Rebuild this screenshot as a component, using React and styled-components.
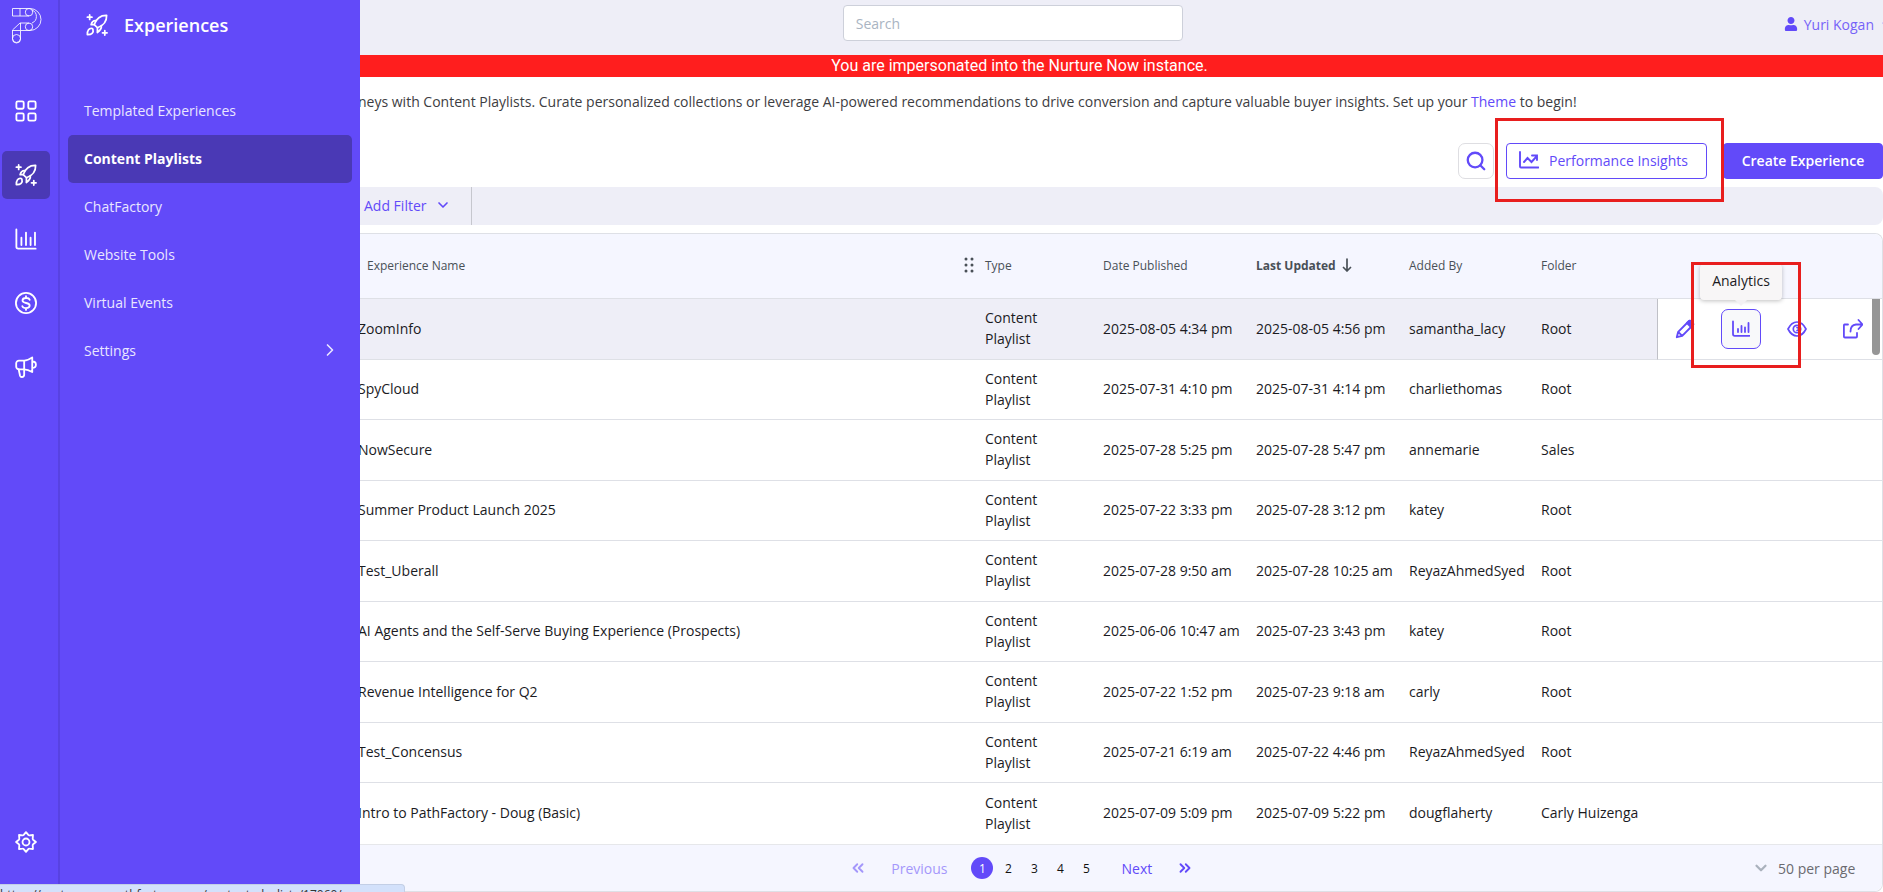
import React from "react";
import styled, { createGlobalStyle, css } from "styled-components";
import { FiSearch, FiChevronDown, FiChevronRight, FiChevronsLeft, FiChevronsRight } from "react-icons/fi";
import { FaUser, FaCaretDown } from "react-icons/fa";

const c = {
  brand: "#624af9",
  brandDark: "#4a39b5",
  railLine: "#5842e2",
  haze: "#eeeef7",
  head: "#f5f6ff",
  line: "#dee0e6",
  text: "#1b1b1f",
  muted: "#495057",
  alert: "#ff1e1e",
  mark: "#e81e1e",
};

const Global = createGlobalStyle`
  *, *::before, *::after { box-sizing: border-box; }
  html, body { margin: 0; background: #fff; }
  body, button, input, select { font-family: "Open Sans", "Noto Sans", sans-serif; font-size: 14px; }
  body { color: ${c.text}; line-height: 21px; }
  button { margin: 0; padding: 0; border: 0; background: none; color: inherit; cursor: pointer; }
  a { color: inherit; text-decoration: none; }
  svg { display: block; flex: none; }
`;

const Page = styled.div`
  display: flex;
  min-height: 100vh;
  overflow: hidden;
`;

/* ---------- navigation ---------- */
const Rail = styled.nav`
  flex: none;
  width: 60px;
  display: flex;
  flex-direction: column;
  gap: 16px;
  padding: 8px 8px 26px 2px;
  border-right: 2px solid ${c.railLine};
  background: ${c.brand};
  color: #fff;
`;

const Logo = styled.a`
  height: 63px;
  padding-left: 10px;
`;

const RailButton = styled.button`
  display: grid;
  place-items: center;
  width: 48px;
  height: 48px;
  border-radius: 5px;
  background: ${(p) => (p.$active ? c.brandDark : "transparent")};
  ${(p) => p.$last && css`margin-top: auto;`}
`;

/* The drawer lies over the left edge of the main column. */
const Drawer = styled.aside`
  position: relative;
  z-index: 1;
  flex: none;
  width: 300px;
  padding: 0 8px;
  background: ${c.brand};
  color: #fff;
`;

const DrawerTitle = styled.h1`
  display: flex;
  align-items: center;
  gap: 16px;
  height: 87px;
  margin: 0;
  padding: 0 18px 38px;
  font-size: 18px;
  font-weight: 600;
  line-height: 24px;
`;

const MenuLink = styled.a`
  display: flex;
  align-items: center;
  justify-content: space-between;
  height: 48px;
  padding: 0 12px 2px 16px;
  border-radius: 5px;
  color: ${(p) => (p.$active ? "#fff" : "#e9e6ff")};
  background: ${(p) => (p.$active ? c.brandDark : "transparent")};
  font-weight: ${(p) => (p.$active ? 700 : 400)};
`;

/* ---------- top ---------- */
const Main = styled.main`
  flex: 1;
  min-width: 0;
  margin-left: -2px;
  display: flex;
  flex-direction: column;
`;

const TopBar = styled.header`
  display: grid;
  grid-template-columns: 9fr 340px 13fr;
  align-items: start;
  height: 55px;
  padding-top: 5px;
  background: ${c.haze};
`;

const SearchField = styled.input`
  grid-column: 2;
  height: 36px;
  padding: 0 12px;
  border: 1px solid #cdd0da;
  border-radius: 4px;
  background: #fff;
  outline: none;
  &::placeholder { color: #a9b4c2; opacity: 1; }
`;

const UserMenu = styled.button`
  justify-self: end;
  display: flex;
  align-items: center;
  gap: 6px;
  height: 40px;
  padding-bottom: 2px;
  color: ${c.brand};
`;

const UserName = styled.span`
  opacity: 0.85;
`;

const CaretClip = styled.span`
  width: 3px;
  overflow: hidden;
`;

const Banner = styled.div`
  height: 22px;
  padding-right: 202px;
  background: ${c.alert};
  color: #fff;
  font: 400 16px/22px Roboto, sans-serif;
  text-align: center;
`;

const Intro = styled.p`
  height: 66px;
  margin: 0;
  padding-top: 14px;
  color: #3d3d42;
  white-space: nowrap;
  a { color: ${c.brand}; }
`;

const Toolbar = styled.div`
  display: flex;
  justify-content: flex-end;
  align-items: flex-start;
  height: 44px;
`;

const ToolButton = styled.button`
  display: flex;
  align-items: center;
  justify-content: center;
  gap: 10px;
  height: 36px;
  padding-bottom: 2px;
  border: 1px solid ${c.brand};
  border-radius: 4px;
  color: ${c.brand};
  ${(p) => p.$kind === "icon" && css`width: 36px; padding-bottom: 0; border-color: #dedee2; border-radius: 7px;`}
  ${(p) => p.$kind === "outline" && css`width: 201px; padding-right: 6px;`}
  ${(p) => p.$kind === "solid" && css`width: 160px; background: ${c.brand}; color: #fff; font-weight: 600;`}
`;

const Marked = styled.div`
  position: relative;
  display: flex;
`;

const ToolbarMarked = styled(Marked)`
  margin: 0 16px 0 12px;
`;

const ToolbarMark = styled.span`
  position: absolute;
  inset: -25px -17px -23px -11px;
  border: 3px solid ${c.mark};
  pointer-events: none;
`;

const ActionMark = styled(ToolbarMark)`
  inset: -47px -40px -19px -30px;
  z-index: 3;
`;

const FilterBar = styled.div`
  display: flex;
  height: 38px;
  margin-bottom: 8px;
  border-radius: 0 8px 8px 0;
  background: ${c.haze};
`;

const AddFilter = styled.button`
  display: flex;
  align-items: center;
  gap: 8px;
  width: 114px;
  padding: 0 0 2px 6px;
  border-right: 1px solid #c6c7ce;
  color: ${c.brand};
`;

/* ---------- table ---------- */
const Panel = styled.section`
  position: relative;
  border: 1px solid ${c.line};
  border-left: 0;
  border-radius: 0 8px 8px 0;
`;

const Table = styled.table`
  width: 100%;
  table-layout: fixed;
  border-collapse: separate;
  border-spacing: 0;
`;

const Th = styled.th`
  height: 65px;
  width: ${(p) => p.$w || "auto"};
  padding: 0 0 2px;
  border-bottom: 1px solid ${c.line};
  background: ${c.head};
  color: ${c.muted};
  font-size: 12px;
  font-weight: ${(p) => (p.$sorted ? 700 : 400)};
  text-align: left;
  &:last-child { border-top-right-radius: 8px; }
`;

const HeadCell = styled.span`
  display: flex;
  align-items: center;
  gap: 6px;
  ${(p) => p.$first && css`justify-content: space-between; padding: 0 10px 0 9px;`}
`;

const Row = styled.tr`
  height: 60px;
  &:nth-child(odd) { height: 61px; }
  background: ${(p) => (p.$hover ? c.haze : "#fff")};
`;

const Td = styled.td`
  padding: ${(p) => (p.$wrap ? "0 40px 2px 0" : "0 0 2px")};
  border-bottom: 1px solid ${c.line};
  white-space: ${(p) => (p.$wrap ? "normal" : "nowrap")};
  tr:last-child & { border-bottom: 0; }
`;

const ActionsTd = styled(Td)`
  padding: 0 0 0 7px;
  ${(p) => p.$open && css`border-left: 1px solid #bfc0c7; background: #fff;`}
`;

const Actions = styled.div`
  display: flex;
  gap: 16px;
`;

const ActionButton = styled.button`
  display: grid;
  place-items: center;
  width: 40px;
  height: 40px;
  border: 1px solid ${(p) => (p.$active ? c.brand : "transparent")};
  border-radius: 7px;
  background: ${(p) => (p.$active ? "#f8f9fa" : "transparent")};
  color: ${c.brand};
`;

const Tooltip = styled.span`
  position: absolute;
  z-index: 2;
  bottom: 49px;
  left: 50%;
  transform: translateX(-50%);
  width: 82px;
  height: 36px;
  border-radius: 4px;
  background: #f8f6f7;
  box-shadow: 0 1px 4px rgba(0, 0, 0, 0.25);
  line-height: 34px;
  text-align: center;
  &::after {
    content: "";
    position: absolute;
    top: 100%;
    left: 35px;
    border: 6px solid transparent;
    border-top-color: #f3f1f3;
    border-bottom: 0;
  }
`;

const ScrollThumb = styled.span`
  position: absolute;
  top: 65px;
  right: 2px;
  width: 8px;
  height: 56px;
  border-radius: 0 0 4px 4px;
  background: #969696;
`;

const PanelFooter = styled.footer`
  display: grid;
  grid-template-columns: 5fr auto 7fr;
  align-items: center;
  height: 47px;
  border-top: 1px solid #e6e7ea;
  border-bottom-right-radius: 8px;
  background: ${c.head};
`;

const Pager = styled.nav`
  grid-column: 2;
  display: flex;
  align-items: center;
  gap: 24px;
`;

const PagerButton = styled.button`
  color: ${c.brand};
  opacity: ${(p) => (p.disabled ? 0.55 : 1)};
`;

const PageList = styled.div`
  display: flex;
  gap: 4px;
`;

const PageNumber = styled.button`
  width: 22px;
  height: 22px;
  border-radius: 50%;
  font-size: 12px;
  color: ${(p) => (p.$current ? "#fff" : "#111")};
  background: ${(p) => (p.$current ? c.brand : "transparent")};
`;

const PerPage = styled.label`
  justify-self: end;
  display: flex;
  align-items: center;
  gap: 8px;
  padding-right: 26px;
  color: #aab2bd;
`;

const PerPageSelect = styled.select`
  appearance: none;
  padding: 0;
  border: 0;
  background: none;
  color: #6a6a70;
`;

const StatusBubble = styled.div`
  position: fixed;
  z-index: 5;
  left: 0;
  bottom: 0;
  width: 405px;
  height: 8px;
  overflow: hidden;
  border: solid #c3cfe6;
  border-width: 1px 1px 0 0;
  border-top-right-radius: 4px;
  background: #d3e1fb;
  color: #333;
  font-size: 12px;
  line-height: 20px;
  white-space: nowrap;
`;

/* ---------- icons ---------- */
const Svg = ({ size = 22, w = 2, children, box = 24 }) => (
  <svg width={size} height={size} viewBox={`0 0 ${box} ${box}`} fill="none" stroke="currentColor"
    strokeWidth={w} strokeLinecap="round" strokeLinejoin="round" aria-hidden="true">
    {children}
  </svg>
);

const LogoMark = () => (
  <svg width="30" height="36" viewBox="0 0 30 36" fill="none" stroke="#fff" strokeOpacity=".85" strokeWidth="1" aria-hidden="true">
    <path d="M.5.5H18a11 11 0 0 1 0 22H8.500V31a4 4 0 0 1-8 0V22L8 15H17" />
    <path d="M.5.5V8H17M8 .5V8M8.500 22.500V15M.5 22.500H8.500" />
    <circle cx="17" cy="4.200" r="3.700" />
    <circle cx="17" cy="18.800" r="3.700" />
    <circle cx="4.500" cy="30.500" r="4" />
    <path d="M20 2a7 7 0 0 1 0 13" />
  </svg>
);

const GridIcon = () => (
  <Svg>
    <rect x="1.500" y="1.500" width="8" height="8" rx="1.500" />
    <rect x="14.500" y="1.500" width="8" height="8" rx="1.500" />
    <rect x="1.500" y="14.500" width="8" height="8" rx="1.500" />
    <rect x="14.500" y="14.500" width="8" height="8" rx="1.500" />
  </Svg>
);

const RocketIcon = () => (
  <Svg w={1.9}>
    <path d="M22.500 1.500C16 1.300 11.500 4.500 9 11.500L12.500 15C19.500 12.500 22.700 8 22.500 1.500Z" />
    <path d="M11.200 7.300C8.500 6.900 6.500 8.300 5.600 11.600L9 11.500M16.700 12.800C17.100 15.500 15.700 18 12.400 20.200L12.500 15" />
    <path d="M7 15.800C3.200 14.800 1.300 18 1.500 22.500C6 22.700 8.800 20.500 7.500 16.500" />
    <path d="M4 1V6M1.500 3.500H6.500M20.500 18V23M18 20.500H23" />
  </Svg>
);

const BarsIcon = ({ size, w = 2 }) => (
  <Svg size={size} w={w}>
    <path d="M1.500 1.500V20.500Q1.500 22.500 3.500 22.500H22.500M7 18.500V10.500M12 18.500V5M17 18.500V10.500M21.800 18.500V5" />
  </Svg>
);

/* Shorter bars, set off from the axis. */
const AnalyticsIcon = () => (
  <Svg size={18} w={1.8} box={18}>
    <path d="M1 1.500V14Q1 15.800 2.800 15.800H17.500" />
    <path d="M6 12V9M9.500 12V6M13 12V7.500M16.500 12V3" />
  </Svg>
);

const DollarIcon = () => (
  <Svg>
    <circle cx="12" cy="12" r="11" />
    <path d="M16 8.500C15.500 7 14 6.500 12 6.500C10 6.500 8.200 7.300 8.200 9.200C8.200 13 16 11 16 14.800C16 16.800 14 17.500 12 17.500C10 17.500 8.500 17 8 15.500M12 4.500V6.500M12 17.500V19.500" />
  </Svg>
);

const MegaphoneIcon = () => (
  <Svg>
    <path d="M10 5H4.500A3 3 0 0 0 1.300 8V11.500A3 3 0 0 0 4.500 14.500H10C13 14.500 16 15.800 18.800 17.500V1.500C16 3.500 13 5 10 5ZM10 5V14.500M18.800 6Q22.800 6 22.800 9.500T18.800 13" />
    <path d="M4 14.500L5.500 21.500Q6 23 7.500 22.900Q10 22.900 10 20.500V14.500" />
  </Svg>
);

const GearIcon = () => (
  <Svg>
    <path d="M12 1.200L14.500 4.300Q15 4.800 15.700 4.700L19.600 4.400L19.300 8.300Q19.200 9 19.700 9.500L22.800 12L19.700 14.500Q19.200 15 19.300 15.700L19.600 19.600L15.700 19.300Q15 19.200 14.500 19.700L12 22.800L9.500 19.700Q9 19.200 8.300 19.300L4.400 19.600L4.700 15.700Q4.800 15 4.300 14.500L1.200 12L4.300 9.500Q4.800 9 4.700 8.300L4.400 4.400L8.300 4.700Q9 4.800 9.500 4.300Z" />
    <circle cx="12" cy="12" r="3.800" />
  </Svg>
);

const TrendIcon = () => (
  <Svg size={20} w={1.9} box={20}>
    <path d="M1 2V16.500Q1 17.500 2 17.500H19.500M5 12L8.500 8L12.500 12L17.500 6.500M13 5.500H18V10" strokeLinejoin="miter" />
  </Svg>
);

const PencilIcon = () => (
  <Svg size={20} w={1.9} box={20}>
    <path d="M1.800 18.200L3.200 12.800L13.500 2.500Q15 1 16.500 2.500L17.500 3.500Q19 5 17.500 6.500L7.200 16.800ZM3.200 12.800L7.200 16.800" />
    <path d="M12 4L14.500 1.700L18.300 5.500L16 8Z" fill="currentColor" />
  </Svg>
);

const EyeIcon = () => (
  <Svg size={20} w={1.7} box={20}>
    <path d="M1 10Q4.500 3 10 3T19 10Q15.500 17 10 17T1 10Z" />
    <circle cx="10" cy="10" r="3.700" />
    <path d="M10 8.500Q11.500 8.700 11.500 10T10 11.500" />
  </Svg>
);

const ShareIcon = () => (
  <Svg size={20} w={1.8} box={20}>
    <path d="M5 5.500H1.500Q.9 5.500.9 6.500V17.500Q.9 18.500 2 18.500H13Q14 18.500 14 17.500V14" />
    <path d="M7.500 12.500Q7.500 6 13 5.500H19M15.500 1L19.500 5.500L15.500 10" />
  </Svg>
);

const GripIcon = () => (
  <svg width="12" height="16" viewBox="0 0 12 16" fill="currentColor" aria-hidden="true">
    {[2, 8, 14].map((y) => (
      <React.Fragment key={y}>
        <circle cx="3" cy={y} r="1.500" />
        <circle cx="9" cy={y} r="1.500" />
      </React.Fragment>
    ))}
  </svg>
);

const SortIcon = () => (
  <Svg size={14} w={1.7} box={14}>
    <path d="M5 1V13M1.500 9.500L5 13L8.500 9.500" />
  </Svg>
);

/* ---------- data ---------- */
const rail = [
  { label: "Dashboard", icon: <GridIcon /> },
  { label: "Experiences", icon: <RocketIcon />, active: true },
  { label: "Reports", icon: <BarsIcon /> },
  { label: "Revenue", icon: <DollarIcon /> },
  { label: "Campaigns", icon: <MegaphoneIcon /> },
  { label: "Settings", icon: <GearIcon />, last: true },
];

const menu = ["Templated Experiences", "Content Playlists", "ChatFactory", "Website Tools", "Virtual Events", "Settings"];

const rows = [
  ["ZoomInfo", "2025-08-05 4:34 pm", "2025-08-05 4:56 pm", "samantha_lacy", "Root"],
  ["SpyCloud", "2025-07-31 4:10 pm", "2025-07-31 4:14 pm", "charliethomas", "Root"],
  ["NowSecure", "2025-07-28 5:25 pm", "2025-07-28 5:47 pm", "annemarie", "Sales"],
  ["Summer Product Launch 2025", "2025-07-22 3:33 pm", "2025-07-28 3:12 pm", "katey", "Root"],
  ["Test_Uberall", "2025-07-28 9:50 am", "2025-07-28 10:25 am", "ReyazAhmedSyed", "Root"],
  ["AI Agents and the Self-Serve Buying Experience (Prospects)", "2025-06-06 10:47 am", "2025-07-23 3:43 pm", "katey", "Root"],
  ["Revenue Intelligence for Q2", "2025-07-22 1:52 pm", "2025-07-23 9:18 am", "carly", "Root"],
  ["Test_Concensus", "2025-07-21 6:19 am", "2025-07-22 4:46 pm", "ReyazAhmedSyed", "Root"],
  ["Intro to PathFactory - Doug (Basic)", "2025-07-09 5:09 pm", "2025-07-09 5:22 pm", "dougflaherty", "Carly Huizenga"],
];

const RowActions = () => (
  <Actions>
    <ActionButton aria-label="Edit"><PencilIcon /></ActionButton>
    <Marked>
      <ActionButton $active aria-label="Analytics"><AnalyticsIcon /></ActionButton>
      <Tooltip role="tooltip">Analytics</Tooltip>
      <ActionMark />
    </Marked>
    <ActionButton aria-label="Preview"><EyeIcon /></ActionButton>
    <ActionButton aria-label="Share"><ShareIcon /></ActionButton>
  </Actions>
);

export default function App() {
  return (
    <Page>
      <Global />
      <Rail aria-label="Main">
        <Logo href="#" aria-label="Home"><LogoMark /></Logo>
        {rail.map((r) => (
          <RailButton key={r.label} $active={r.active} $last={r.last} aria-label={r.label}>{r.icon}</RailButton>
        ))}
      </Rail>
      <Drawer>
        <DrawerTitle><RocketIcon />Experiences</DrawerTitle>
        {menu.map((m, i) => (
          <MenuLink key={m} href="#" $active={i === 1}>
            {m}
            {m === "Settings" && <FiChevronRight size={20} />}
          </MenuLink>
        ))}
      </Drawer>
      <Main>
        <TopBar>
          <SearchField type="search" placeholder="Search" aria-label="Search" />
          <UserMenu>
            <FaUser size={14} /><UserName>Yuri Kogan</UserName>
            <CaretClip><FaCaretDown size={12} /></CaretClip>
          </UserMenu>
        </TopBar>
        <Banner role="alert">You are impersonated into the Nurture Now instance.</Banner>
        <Intro>
          neys with Content Playlists. Curate personalized collections or leverage AI-powered recommendations to drive
          conversion and capture valuable buyer insights. Set up your <a href="#">Theme</a> to begin!
        </Intro>
        <Toolbar>
          <ToolButton $kind="icon" aria-label="Search experiences"><FiSearch size={22} strokeWidth={2.5} /></ToolButton>
          <ToolbarMarked>
            <ToolButton $kind="outline"><TrendIcon />Performance Insights</ToolButton>
            <ToolbarMark />
          </ToolbarMarked>
          <ToolButton $kind="solid">Create Experience</ToolButton>
        </Toolbar>
        <FilterBar>
          <AddFilter>Add Filter<FiChevronDown size={16} strokeWidth={2.5} /></AddFilter>
        </FilterBar>
        <Panel>
          <Table>
            <thead>
              <tr>
                <Th><HeadCell $first>Experience Name<GripIcon /></HeadCell></Th>
                <Th $w="118px">Type</Th>
                <Th $w="153px">Date Published</Th>
                <Th $w="153px" $sorted><HeadCell>Last Updated<SortIcon /></HeadCell></Th>
                <Th $w="132px">Added By</Th>
                <Th $w="116px">Folder</Th>
                <Th $w="225px" aria-label="Actions" />
              </tr>
            </thead>
            <tbody>
              {rows.map(([name, published, updated, by, folder], i) => (
                <Row key={name} $hover={i === 0}>
                  <Td>{name}</Td>
                  <Td $wrap>Content Playlist</Td>
                  <Td>{published}</Td>
                  <Td>{updated}</Td>
                  <Td>{by}</Td>
                  <Td>{folder}</Td>
                  <ActionsTd $open={i === 0}>{i === 0 && <RowActions />}</ActionsTd>
                </Row>
              ))}
            </tbody>
          </Table>
          <ScrollThumb />
          <PanelFooter>
            <Pager aria-label="Pages">
              <PagerButton disabled aria-label="First page"><FiChevronsLeft size={18} strokeWidth={2.5} /></PagerButton>
              <PagerButton disabled>Previous</PagerButton>
              <PageList>
                {[1, 2, 3, 4, 5].map((n) => <PageNumber key={n} $current={n === 1}>{n}</PageNumber>)}
              </PageList>
              <PagerButton>Next</PagerButton>
              <PagerButton aria-label="Last page"><FiChevronsRight size={18} strokeWidth={2.5} /></PagerButton>
            </Pager>
            <PerPage>
              <FiChevronDown size={18} strokeWidth={3} />
              <PerPageSelect aria-label="Rows per page"><option>50 per page</option></PerPageSelect>
            </PerPage>
          </PanelFooter>
        </Panel>
      </Main>
      <StatusBubble>https://nurturenow.pathfactory.com/content-playlists/17060/</StatusBubble>
    </Page>
  );
}
